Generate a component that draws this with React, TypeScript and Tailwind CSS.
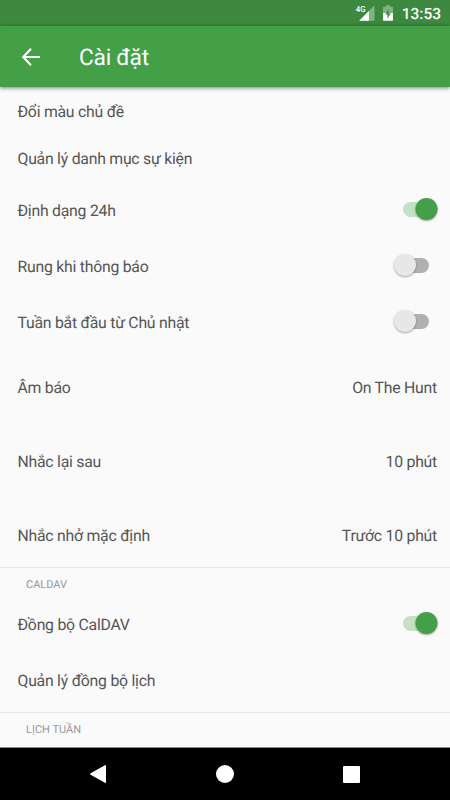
import clsx from 'clsx';

type SettingRowProps = {
  label: string;
  value?: string;
  checked?: boolean;
  className?: string;
};

function Toggle({ checked }: { checked: boolean }) {
  return (
    <button
      type="button"
      role="switch"
      aria-checked={checked}
      className="relative mr-[8px] mb-px h-[15px] w-[26px] shrink-0"
    >
      <span
        className={clsx(
          'block h-full w-full rounded-full',
          checked ? 'bg-[#c3e1c4]' : 'bg-[#b0b0b0]',
        )}
      />
      <span
        className={clsx(
          'absolute top-[-4px] left-0 h-[22px] w-[22px] rounded-full shadow-[0_1px_2px_rgba(0,0,0,0.35)]',
          checked ? 'translate-x-[12.5px] bg-[#43a047]' : 'translate-x-[-9px] bg-[#e7e7e7]',
        )}
      />
    </button>
  );
}

function SettingRow({ label, value, checked, className }: SettingRowProps) {
  return (
    <div className={clsx('flex items-center justify-between pr-[13px] pl-[17.5px]', className)}>
      <span className="pt-px">{label}</span>
      {value && <span className="pt-px">{value}</span>}
      {checked !== undefined && <Toggle checked={checked} />}
    </div>
  );
}

function SectionHeader({ title, className }: { title: string; className?: string }) {
  return (
    <div
      className={clsx(
        'flex items-center border-t border-[#e8e8e8] pl-[26px] text-[11px] tracking-normal text-[#999]',
        className,
      )}
    >
      {title}
    </div>
  );
}

function StatusBar() {
  return (
    <div className="flex h-[26px] shrink-0 items-center justify-end bg-[#3c893f] pr-[9px] text-white">
      <svg width="20" height="26" viewBox="0 0 20 26" className="mr-[8px]">
        <path d="M19.5 5.3V20.7H4.2Z" fill="#fff" fillOpacity="0.35" />
        <path d="M13.9 10.9V20.7H4.2Z" fill="#fff" />
        <rect x="0" y="4" width="11" height="8.5" fill="#3c893f" />
        <text
          x="0.7"
          y="12"
          fill="#fff"
          fontSize="8.5"
          fontWeight="500"
          fontFamily="Roboto, sans-serif"
          textLength="9.8"
          lengthAdjust="spacingAndGlyphs"
        >
          4G
        </text>
      </svg>
      <svg width="10" height="26" viewBox="0 0 10 26" className="mr-[9px]">
        <path d="M3 5.2H7V6.8H9.3Q10 6.8 10 7.5V13H0V7.5Q0 6.8 .7 6.8H3Z" fill="#fff" fillOpacity="0.35" />
        <path d="M0 13H10V20Q10 20.8 9.2 20.8H.8Q0 20.8 0 20Z" fill="#fff" />
        <path d="M5.6 9L2.4 14.4H4.5V18.8L7.7 13.2H5.6Z" fill="#3c893f" />
      </svg>
      <span className="pt-[3px] text-[15.5px] leading-none font-medium">13:53</span>
    </div>
  );
}

function AppBar() {
  return (
    <header className="relative flex h-[61px] shrink-0 items-center bg-[#43a047] pl-[22px] text-white shadow-[0_1px_4px_rgba(0,0,0,0.5)]">
      <svg
        width="18"
        height="18"
        viewBox="0 0 18 18"
        fill="none"
        stroke="currentColor"
        strokeWidth="2"
      >
        <path d="M18 9H1.7M9 .8L1.2 9L9 17.2" />
      </svg>
      <h1 className="ml-[39px] pt-[3px] text-[22.8px] leading-none tracking-[-0.3px]">Cài đặt</h1>
    </header>
  );
}

function NavigationBar() {
  return (
    <nav className="flex h-[53px] shrink-0 items-center justify-between border-t border-[#888] bg-black pr-[90px] pl-[90px]">
      <svg width="16" height="18" viewBox="0 0 16 18" fill="#fff">
        <path d="M.6 8.3L14.9 .2Q16 -.2 16 .8V17.2Q16 18.2 14.9 17.8L.6 9.7Q-.3 9 .6 8.3Z" />
      </svg>
      <span className="h-[18px] w-[18px] rounded-full bg-white" />
      <span className="h-[17px] w-[17px] rounded-[1px] bg-white" />
    </nav>
  );
}

export default function App() {
  return (
    <div className="flex h-[800px] w-[450px] flex-col overflow-hidden bg-[#fafafa] font-[Roboto,sans-serif] [text-rendering:geometricPrecision]">
      <StatusBar />
      <AppBar />
      <main className="flex-1 text-[15.8px] leading-[20px] tracking-[-0.24px] text-[#555]">
        <SettingRow label="Đổi màu chủ đề" className="h-[48px]" />
        <SettingRow label="Quản lý danh mục sự kiện" className="h-[47px]" />
        <SettingRow label="Định dạng 24h" checked className="h-[56px]" />
        <SettingRow label="Rung khi thông báo" checked={false} className="h-[56px]" />
        <SettingRow label="Tuần bắt đầu từ Chủ nhật" checked={false} className="h-[56px]" />
        <SettingRow label="Âm báo" value="On The Hunt" className="h-[74px]" />
        <SettingRow label="Nhắc lại sau" value="10 phút" className="h-[74px]" />
        <SettingRow label="Nhắc nhở mặc định" value="Trước 10 phút" className="h-[69px] pt-[5px]" />
        <SectionHeader title="CALDAV" className="h-[29px] pt-[5px]" />
        <SettingRow label="Đồng bộ CalDAV" checked className="h-[56px]" />
        <SettingRow label="Quản lý đồng bộ lịch" className="h-[60px] pb-[4px]" />
        <SectionHeader title="LỊCH TUẦN" className="h-[35px]" />
      </main>
      <NavigationBar />
    </div>
  );
}
